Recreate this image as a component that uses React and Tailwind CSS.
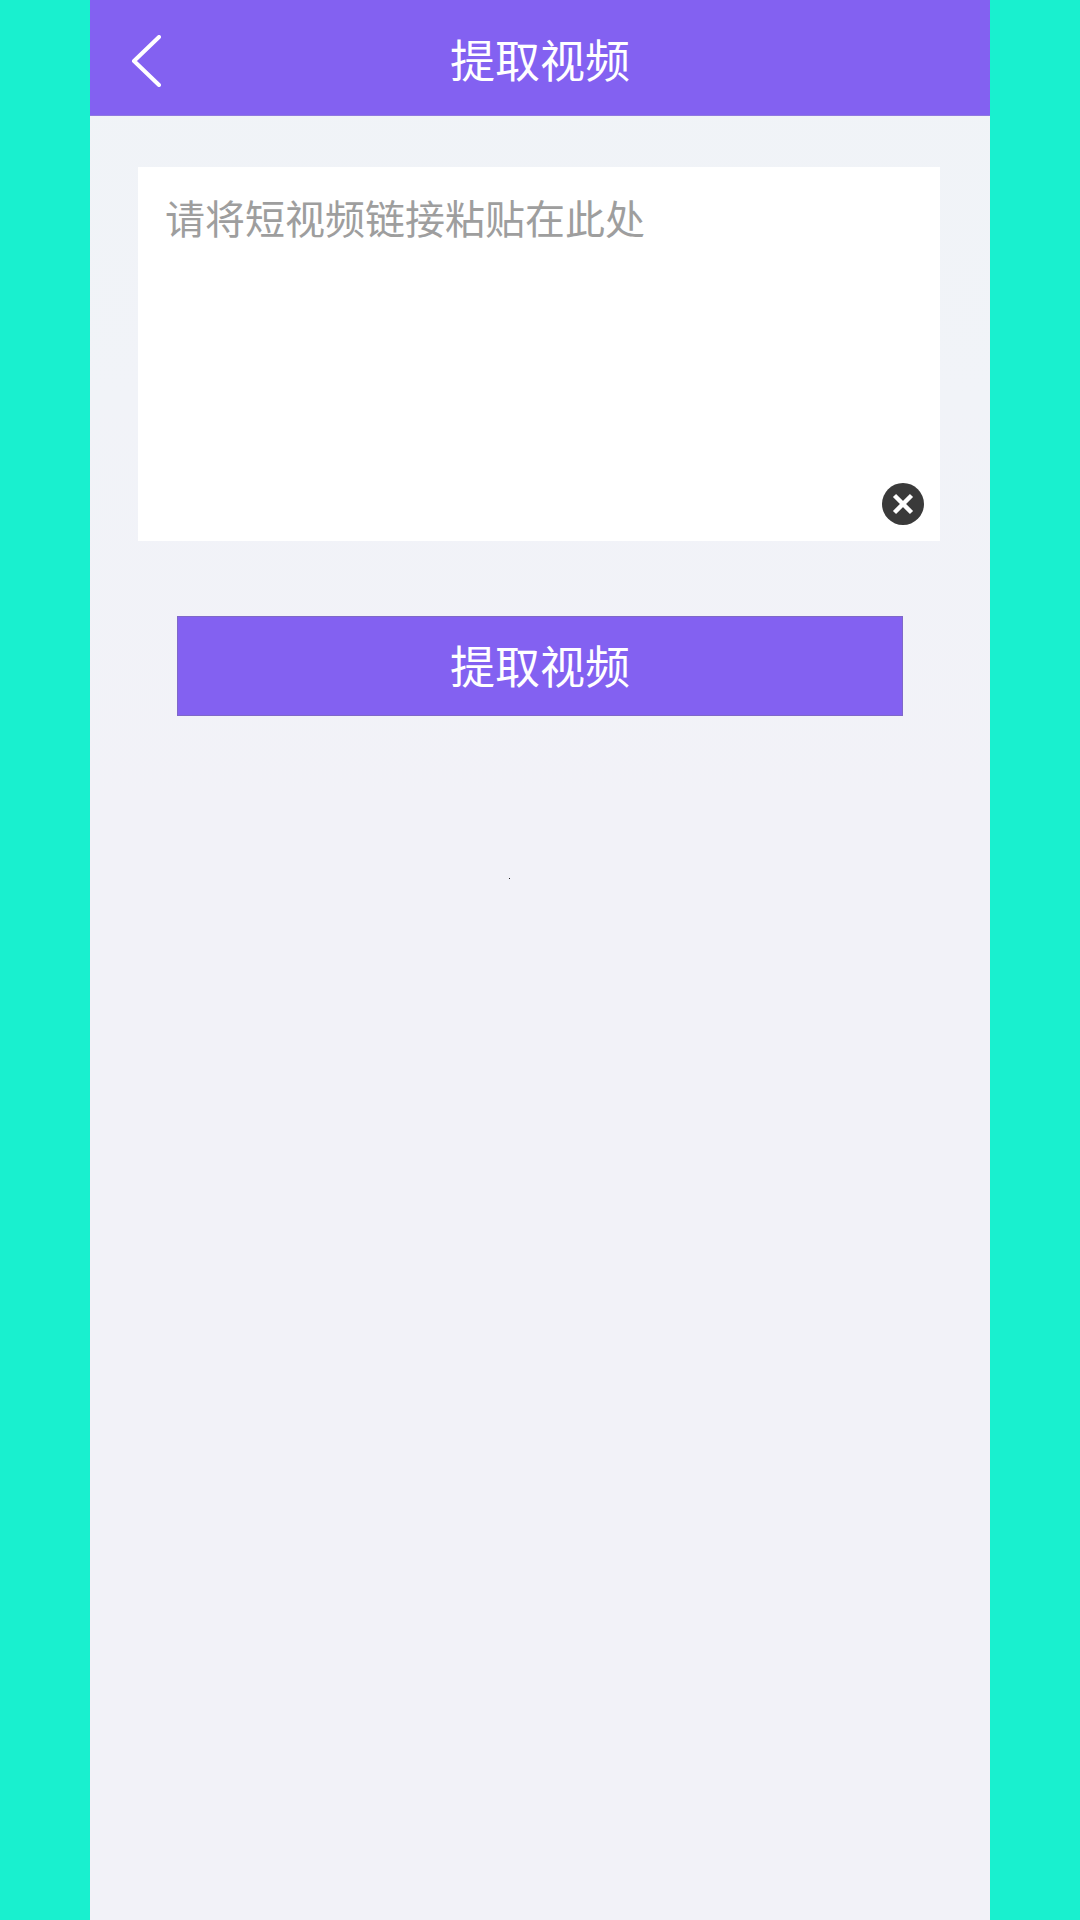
export default function App() {
  const font = "font-['Noto_Sans_CJK_SC','Noto_Sans',sans-serif]";
  return (
    <div className={`flex min-h-[1920px] w-full justify-center bg-[#19f0cf] ${font}`}>
      <div className="flex min-h-[1920px] w-[900px] flex-col bg-[linear-gradient(180deg,#f0f3f7_0px,#f1f3f8_400px,#f2f2f8_800px)]">
        <header className="relative flex h-[116px] items-center justify-center border-b border-[#8f78e0] bg-[#8361f1] pt-[2px]">
          <button className="absolute left-[41px] top-[35px] flex h-[52px] w-[30px] items-center justify-center" aria-label="返回">
            <svg width="30" height="52" viewBox="0 0 30 52" fill="none">
              <path d="M28 2 L3 26 L28 50" stroke="#ffffff" strokeWidth="4" strokeLinecap="round" strokeLinejoin="round" />
            </svg>
          </button>
          <h1 className="text-[45px] font-normal leading-none text-white">提取视频</h1>
        </header>
        <main className="flex flex-col px-[48px] pt-[51px]">
          <div className="relative h-[374px] w-[802px] bg-white pl-[27px] pt-[26px]">
            <p className="text-[40px] leading-[48px] text-[#9e9e9e]">请将短视频链接粘贴在此处</p>
            <button className="absolute right-[16px] bottom-[16px] flex h-[42px] w-[42px] items-center justify-center rounded-full bg-[#3a3a3a]" aria-label="清除">
              <svg width="22" height="22" viewBox="0 0 22 22" fill="none">
                <path d="M2.5 2.5 L19.5 19.5 M19.5 2.5 L2.5 19.5" stroke="#ffffff" strokeWidth="4.4" strokeLinecap="butt" />
              </svg>
            </button>
          </div>
          <button className="mx-[39px] mt-[75px] flex h-[100px] w-[726px] items-center justify-center border border-[#7f68c8] bg-[#8361f1] pb-[4px] text-[45px] leading-none text-white">
            提取视频
          </button>
          <div className="ml-[371px] mt-[162px] h-px w-px bg-[#222222]" />
        </main>
      </div>
    </div>
  );
}
